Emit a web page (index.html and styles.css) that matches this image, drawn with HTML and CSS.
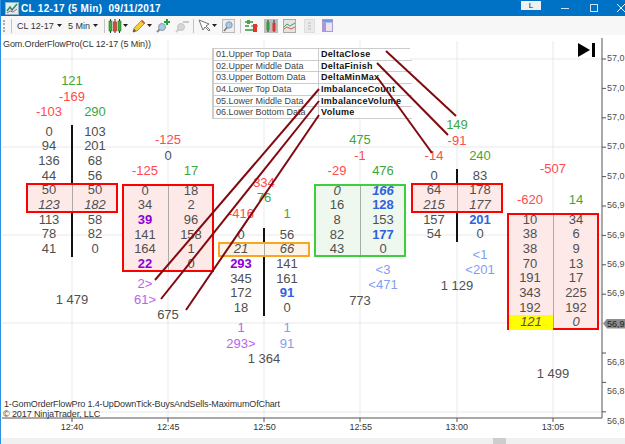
FILE: index.html
```html
<!DOCTYPE html>
<html lang="en">

<head>
    <meta charset="UTF-8">
    <title>CL 12-17 (5 Min) 09/11/2017</title>
    <link rel="stylesheet" href="styles.css">
</head>

<body>
    <div class="window">
        <div class="titlebar">
            <svg class="title-icon" viewBox="0 0 14 13">
                <rect x="0.5" y="0.5" width="13" height="12" fill="#dfeaf2" stroke="#8fb3c9" />
                <path d="M2 9l3-4 2 3 5-6" fill="none" stroke="#2d8f5a" stroke-width="1.5" />
                <path d="M2 11l3-2 3 1 4-3" fill="none" stroke="#c25a7a" />
            </svg>
            <span class="title-text">CL 12-17 (5 Min)&nbsp; 09/11/2017</span>
            <span class="link-btn">L</span>
            <span class="win-min"></span>
            <span class="win-max"></span>
            <svg class="win-close" viewBox="0 0 8 8">
                <path d="M0 0l8 8M8 0l-8 8" stroke="#fff" stroke-width="1" />
            </svg>
        </div>

        <div class="toolbar">
            <span class="grip"></span>
            <span class="sep ml6"></span>
            <span class="tool-label ml5 w35">CL 12-17</span>
            <span class="caret ml5"></span>
            <span class="tool-label ml6 w21">5 Min</span>
            <span class="caret ml4"></span>
            <span class="sep ml6"></span>
            <svg class="tool ml3" viewBox="0 0 14 14">
                <path d="M2.5 0v14M7 0v14M11.5 0v14" stroke="#333" />
                <rect x="1" y="2" width="3" height="10" fill="#3fae3f" stroke="#2a6e2a" stroke-width=".6" />
                <rect x="5.5" y="3" width="3" height="9" fill="#e04a3a" stroke="#8a2a20" stroke-width=".6" />
                <rect x="10" y="2" width="3" height="10" fill="#3fae3f" stroke="#2a6e2a" stroke-width=".6" />
            </svg>
            <span class="caret ml1"></span>
            <svg class="tool ml4" viewBox="0 0 14 14">
                <path d="M1 13l1-4 8-8 3 3-8 8z" fill="#f4c93a" stroke="#a8842a" stroke-width=".8" />
                <path d="M9.5 1.5l3 3" stroke="#d9574a" stroke-width="1.6" />
                <path d="M1 13l1-3 2 2z" fill="#444" />
            </svg>
            <span class="caret ml1"></span>
            <svg class="tool ml4" viewBox="0 0 14 14">
                <path d="M1 13l3-3" stroke="#8a8a8a" stroke-width="2" />
                <circle cx="6" cy="8" r="3.5" fill="#a9c9e8" stroke="#8a9aa8" />
                <path d="M11 0v6M8 3h6" stroke="#1fa02f" stroke-width="2" />
            </svg>
            <svg class="tool ml5" viewBox="0 0 14 14">
                <path d="M1 13l3-3" stroke="#ccc" stroke-width="2" />
                <circle cx="6" cy="8" r="3.5" fill="#d6d6d6" stroke="#c4c4c4" />
                <path d="M8 3h6" stroke="#c8c8c8" stroke-width="2" />
            </svg>
            <span class="sep ml4"></span>
            <svg class="tool tool-narrow ml4" viewBox="0 0 13 14">
                <path d="M1 1l4 10 2-3 4 4 1-1-4-4 3-2z" fill="#fff" stroke="#666" stroke-width=".9" />
            </svg>
            <span class="caret ml1"></span>
            <svg class="tool tool-narrow ml5" viewBox="0 0 13 14">
                <rect x="0.5" y="0.5" width="12" height="13" fill="#eee" stroke="#bbb" />
                <circle cx="7" cy="6" r="3.2" fill="#a9c9e8" stroke="#8a9aa8" />
                <path d="M2 12l3-3.5" stroke="#777" stroke-width="1.6" />
            </svg>
            <span class="sep ml5"></span>
            <svg class="tool tool-narrow ml4" viewBox="0 0 13 14">
                <path d="M0 3h8M0 7h4M0 11h8" stroke="#2f9a3a" stroke-width="1.6" />
                <path d="M6 7h7" stroke="#666" />
                <rect x="8" y="5" width="4" height="8" fill="#d8392f" />
                <rect x="2" y="1" width="3" height="4" fill="#3fae3f" />
            </svg>
            <svg class="tool ml6" viewBox="0 0 14 14">
                <rect width="14" height="14" fill="#bdbdbd" />
                <path d="M4 1v12M10 1v12" stroke="#333" />
                <rect x="2.5" y="3" width="3" height="8" fill="#3c9a3c" />
                <rect x="8.5" y="4" width="3" height="8" fill="#d8392f" />
            </svg>
            <svg class="tool tool-narrow ml5" viewBox="0 0 13 14">
                <rect x="0.5" y="0.5" width="12" height="13" fill="#e4e4e4" stroke="#aaa" />
                <path d="M1 8l3-3 3 2 5-3" fill="none" stroke="#4aa35a" />
                <path d="M1 10l3-2 4 2 4-2" fill="none" stroke="#d9574a" />
            </svg>
            <svg class="tool tool-narrow ml7" viewBox="0 0 13 14">
                <rect x="1.5" y="0.5" width="10" height="13" fill="#eaeaea" stroke="#ddd" />
                <path d="M5 4h3M5 7h3M5 10h3" stroke="#bbb" />
            </svg>
            <svg class="tool tool-small ml6" viewBox="0 0 11 13">
                <rect x="0.5" y="0.5" width="10" height="12" fill="#e8e4f4" stroke="#a89ccc" />
                <rect x="1" y="1" width="9" height="2.5" fill="#6f9ee0" />
                <rect x="1" y="3.5" width="3" height="9" fill="#b690e0" />
            </svg>
        </div>

        <div class="chart">
            <svg class="layer" viewBox="0 0 625 403">
                <g class="gridlines">
                    <path d="M72 6V383M168 6V383M264 6V383M360 6V383M457 6V383M553 6V383" />
                    <path d="M2 24H602M2 112H602M2 200H602M2 288H602M2 377H602" />
                </g>
                <g class="axis-lines">
                    <path d="M2 383H602M602 3V383" />
                    <path d="M72 383v4M168 383v4M264 383v4M360 383v4M457 383v4M553 383v4" />
                    <path d="M602 24h4M602 53.400h4M602 82.800h4M602 112.200h4M602 141.600h4M602 171h4M602 200.400h4M602 229.800h4M602 259.200h4M602 318h4M602 347.400h4M602 376.800h4" />
                </g>
            </svg>

            <div class="legend legend-top">Gom.OrderFlowPro(CL 12-17 (5 Min))</div>
            <div class="legend legend-name">1-GomOrderFlowPro 1.4-UpDownTick-BuysAndSells-MaximumOfChart</div>
            <div class="legend legend-copy">&copy; 2017 NinjaTrader, LLC</div>

            <div class="cluster c1">
                <div class="row wide green">121</div>
                <div class="row wide red">-169</div>
                <div class="row"><span class="red">-103</span><span class="green">290</span></div>
                <div class="ladder">
                    <div class="row"><span>0</span><span>103</span></div>
                    <div class="row"><span>94</span><span>201</span></div>
                    <div class="row"><span>136</span><span>68</span></div>
                    <div class="row"><span>44</span><span>56</span></div>
                    <div class="zone zone-red">
                        <div class="row"><span>50</span><span>50</span></div>
                        <div class="row italic"><span>123</span><span>182</span></div>
                    </div>
                    <div class="row"><span>113</span><span>58</span></div>
                    <div class="row"><span>78</span><span>82</span></div>
                    <div class="row"><span>41</span><span>0</span></div>
                </div>
                <div class="row"></div>
                <div class="row"></div>
                <div class="row wide">1 479</div>
            </div>

            <div class="cluster c2">
                <div class="row wide red">-125</div>
                <div class="row wide">0</div>
                <div class="row"><span class="red">-125</span><span class="green">17</span></div>
                <div class="ladder">
                    <div class="zone zone-red">
                        <div class="row"><span>0</span><span>18</span></div>
                        <div class="row"><span>34</span><span>2</span></div>
                        <div class="row"><span class="purple">39</span><span>96</span></div>
                        <div class="row"><span>141</span><span>158</span></div>
                        <div class="row"><span>164</span><span>1</span></div>
                        <div class="row"><span class="purple">22</span><span>0</span></div>
                    </div>
                </div>
                <div class="row"><span class="lilac">2&gt;</span><span></span></div>
                <div class="row"><span class="lilac">61&gt;</span><span></span></div>
                <div class="row wide">675</div>
            </div>

            <div class="cluster c3">
                <div class="row wide red">334</div>
                <div class="row wide green">76</div>
                <div class="row"><span class="red">-416</span><span class="green">1</span></div>
                <div class="ladder">
                    <div class="row"><span>0</span><span>56</span></div>
                    <div class="zone zone-orange">
                        <div class="row italic"><span>21</span><span>66</span></div>
                    </div>
                    <div class="row"><span class="purple">293</span><span>141</span></div>
                    <div class="row"><span>345</span><span>161</span></div>
                    <div class="row"><span>172</span><span class="blue">91</span></div>
                    <div class="row"><span>18</span><span>0</span></div>
                </div>
                <div class="row"><span class="lilac">1</span><span class="sky">1</span></div>
                <div class="row"><span class="lilac">293&gt;</span><span class="sky">91</span></div>
                <div class="row wide">1 364</div>
            </div>

            <div class="cluster c4">
                <div class="row wide green">475</div>
                <div class="row wide red">-1</div>
                <div class="row"><span class="red">-29</span><span class="green">476</span></div>
                <div class="ladder">
                    <div class="zone zone-green">
                        <div class="row italic"><span>0</span><span class="blue">166</span></div>
                        <div class="row"><span>16</span><span class="blue">128</span></div>
                        <div class="row"><span>8</span><span>153</span></div>
                        <div class="row"><span>82</span><span class="blue">177</span></div>
                        <div class="row"><span>43</span><span>0</span></div>
                    </div>
                </div>
                <div class="row"><span></span><span class="sky">&lt;3</span></div>
                <div class="row"><span></span><span class="sky">&lt;471</span></div>
                <div class="row wide">773</div>
            </div>

            <div class="cluster c5">
                <div class="row wide green">149</div>
                <div class="row wide red">-91</div>
                <div class="row"><span class="red">-14</span><span class="green">240</span></div>
                <div class="ladder">
                    <div class="row"><span>0</span><span>83</span></div>
                    <div class="zone zone-red">
                        <div class="row"><span>64</span><span>178</span></div>
                        <div class="row italic"><span>215</span><span>177</span></div>
                    </div>
                    <div class="row"><span>157</span><span class="blue">201</span></div>
                    <div class="row"><span>54</span><span>0</span></div>
                </div>
                <div class="row"><span></span><span class="sky">&lt;1</span></div>
                <div class="row"><span></span><span class="sky">&lt;201</span></div>
                <div class="row wide">1 129</div>
            </div>

            <div class="cluster c6">
                <div class="row wide red">-507</div>
                <div class="row"></div>
                <div class="row"><span class="red">-620</span><span class="green">14</span></div>
                <div class="ladder">
                    <div class="zone zone-red">
                        <div class="row"><span>10</span><span>34</span></div>
                        <div class="row"><span>38</span><span>6</span></div>
                        <div class="row"><span>38</span><span>9</span></div>
                        <div class="row"><span>70</span><span>13</span></div>
                        <div class="row"><span>191</span><span>17</span></div>
                        <div class="row"><span>343</span><span>225</span></div>
                        <div class="row"><span>192</span><span>192</span></div>
                        <div class="row italic"><span class="poc">121</span><span>0</span></div>
                    </div>
                </div>
                <div class="row"></div>
                <div class="row"></div>
                <div class="row wide">1 499</div>
            </div>

            <div class="data-table">
                <span>01.Upper Top Data</span><b>DeltaClose</b>
                <span>02.Upper Middle Data</span><b>DeltaFinish</b>
                <span>03.Upper Bottom Data</span><b>DeltaMinMax</b>
                <span>04.Lower Top Data</span><b>ImbalanceCount</b>
                <span>05.Lower Middle Data</span><b>ImbalanceVolume</b>
                <span>06.Lower Bottom Data</span><b>Volume</b>
            </div>

            <svg class="layer" viewBox="0 0 625 403">
                <g class="drawn-lines">
                    <path d="M386 16L456 81" />
                    <path d="M377 28L448 100" />
                    <path d="M377 42L432 118" />
                    <path d="M319 54L155 245" />
                    <path d="M319 66L161 264" />
                    <path d="M319 80L186 275" />
                </g>
                <path class="end-mark" d="M578 8L590 15L578 22z" />
                <rect class="end-mark" x="592" y="8" width="3" height="14" />
            </svg>

            <div class="price-axis">
                <div class="price">57,0</div>
                <div class="price">57,0</div>
                <div class="price">57,0</div>
                <div class="price">57,0</div>
                <div class="price">57,0</div>
                <div class="price">56,9</div>
                <div class="price">56,9</div>
                <div class="price">56,9</div>
                <div class="price">56,9</div>
                <div class="price"><span class="last-price">56,9</span></div>
                <div class="price">56,8</div>
                <div class="price">56,8</div>
                <div class="price">56,8</div>
            </div>

            <div class="time-axis">
                <span>12:40</span>
                <span>12:45</span>
                <span>12:50</span>
                <span>12:55</span>
                <span>13:00</span>
                <span>13:05</span>
            </div>
        </div>

        <div class="scrollbar"><span class="thumb"></span></div>
    </div>
</body>

</html>
```

FILE: styles.css
```css
* {
    box-sizing: border-box;
}

body {
    margin: 0;
    font-family: "Liberation Sans", Arial, sans-serif;
    color: #505050;
}

.window {
    position: relative;
    width: 625px;
    height: 444px;
    overflow: hidden;
    display: flex;
    flex-direction: column;
    background-color: #fff;
}

/* thin blue window edge on the left */
.window::before {
    content: "";
    position: absolute;
    left: 0;
    top: 0;
    bottom: 0;
    width: 1px;
    background-color: #2f8fe0;
    z-index: 5;
}

/* Title bar */
.titlebar {
    height: 16px;
    display: flex;
    align-items: center;
    background-color: #0072c6;
    color: #fff;
}

.title-icon {
    width: 14px;
    height: 13px;
    margin-left: 5px;
}

.title-text {
    margin-left: 2px;
    font-size: 10px;
    font-weight: bold;
    letter-spacing: 0.3px;
    white-space: nowrap;
}

.link-btn {
    width: 20px;
    height: 9px;
    margin-left: auto;
    background-color: #f0f0f0;
    color: #222;
    font-size: 8px;
    line-height: 9px;
    text-align: center;
    margin-bottom: 6px;
}

.win-min {
    width: 8px;
    height: 1px;
    margin-left: 20px;
    background-color: #cfe4f5;
}

.win-max {
    width: 8px;
    height: 8px;
    margin-left: 21px;
    border: 1px solid #cfe4f5;
}

.win-close {
    width: 8px;
    height: 8px;
    margin-left: 19px;
    flex: none;
}

/* Toolbar */
.toolbar {
    height: 19px;
    padding-left: 3px;
    display: flex;
    align-items: center;
    background-color: #f7f7f7;
    font-size: 9px;
    color: #333;
}

.grip {
    width: 2px;
    height: 12px;
    border-left: 2px dotted #aaa;
}

.sep {
    width: 1px;
    height: 14px;
    background-color: #c4c4c4;
}

.tool-label {
    white-space: nowrap;
}

.w35 {
    width: 35px;
}

.w21 {
    width: 21px;
}

.caret {
    width: 5px;
    height: 3px;
    clip-path: polygon(0 0, 100% 0, 50% 100%);
    background-color: #222;
}

.tool {
    width: 14px;
    height: 14px;
    flex: none;
}

.tool-narrow {
    width: 13px;
}

.tool-small {
    width: 11px;
    height: 13px;
}

.ml1 { margin-left: 1px; }
.ml3 { margin-left: 3px; }
.ml4 { margin-left: 4px; }
.ml5 { margin-left: 5px; }
.ml6 { margin-left: 6px; }
.ml7 { margin-left: 7px; }

/* Chart */
.chart {
    position: relative;
    height: 403px;
    overflow: hidden;
    background-color: #fff;
}

.layer {
    position: absolute;
    left: 0;
    top: 0;
    width: 625px;
    height: 403px;
}

.gridlines path {
    fill: none;
    stroke: #e9e9e9;
    stroke-width: 1;
}

.axis-lines path {
    fill: none;
    stroke: #555;
    stroke-width: 1;
}

.drawn-lines path {
    fill: none;
    stroke: #800a10;
    stroke-width: 2;
}

.end-mark {
    fill: #000;
}

.legend {
    position: absolute;
    left: 3px;
    font-size: 9px;
    color: #333;
    white-space: nowrap;
    letter-spacing: -0.1px;
}

.legend-top {
    top: 4px;
}

.legend-name {
    top: 364px;
    left: 4px;
    letter-spacing: -0.14px;
}

.legend-copy {
    top: 374px;
}

/* Footprint clusters */
.cluster {
    position: absolute;
    width: 92px;
    font-size: 13px;
}

.c1 { left: 26px; top: 38.2px; }
.c2 { left: 122px; top: 97.2px; }
.c3 { left: 218px; top: 139.7px; }
.c4 { left: 314px; top: 97.2px; }
.c5 { left: 411px; top: 82.2px; }
.c6 { left: 507px; top: 126.2px; }

.row {
    height: 15.5px;
    line-height: 15.5px;
    display: grid;
    grid-template-columns: 1fr 1fr;
    text-align: center;
}

.row.wide {
    display: block;
}

.ladder {
    position: relative;
    margin: 5px 0 4.6px;
}

.c3 .ladder {
    margin-top: 6.5px;
}

.ladder::before {
    content: "";
    position: absolute;
    left: 45px;
    top: 0;
    bottom: 0;
    width: 2px;
    background-color: #111;
}

.ladder .row {
    position: relative;
    height: 14.67px;
    line-height: 14.67px;
}

.zone {
    position: relative;
    outline: 2px solid;
    outline-offset: -2px;
}

/* gray centre line inside a zone */
.zone::before {
    content: "";
    position: absolute;
    left: 45.5px;
    top: 2px;
    bottom: 2px;
    width: 1px;
    background-color: #aaa;
}

.zone-red {
    outline-color: #f00;
    background-color: #fee9e9;
}

.zone-orange {
    outline-color: #f7a823;
    background-color: #fdf3e6;
}

.zone-green {
    outline-color: #3fce3f;
    background-color: #eef8ee;
}

.italic {
    font-style: italic;
}

.red { color: #ff4b4b; }
.green { color: #3ea63e; }
.purple { color: #8c00d8; font-weight: bold; }
.blue { color: #2f62dc; font-weight: bold; }
.lilac { color: #bb62ee; }
.sky { color: #7f9ff0; }

.poc {
    margin: 0 0 1px 2px;
    background-color: #ff0;
}

/* Indicator table */
.data-table {
    position: absolute;
    left: 212px;
    top: 13px;
    width: 198px;
    display: grid;
    grid-template-columns: 105px 93px;
    grid-auto-rows: 11.7px;
    background-color: #fff;
    border-top: 1px solid #ccc;
    border-left: 2px solid #ccc;
    font-size: 9px;
    line-height: 10.5px;
    color: #444;
}

.data-table span,
.data-table b {
    padding-left: 2px;
    border-bottom: 1px solid #ccc;
    white-space: nowrap;
}

.data-table span {
    border-right: 1px solid #ccc;
}

.data-table b {
    letter-spacing: 0.3px;
    color: #111;
}

/* Axes */
.price-axis {
    position: absolute;
    left: 603px;
    top: 9.3px;
    width: 22px;
    overflow: hidden;
    font-size: 9px;
}

.price {
    height: 29.4px;
    line-height: 29.4px;
    padding-left: 4px;
    white-space: nowrap;
}

.last-price {
    display: block;
    height: 10px;
    margin-left: -4px;
    padding-left: 4px;
    margin-top: 9.7px;
    line-height: 10px;
    background-color: #8c8c8c;
    clip-path: polygon(0 50%, 4px 0, 100% 0, 100% 100%, 4px 100%);
    color: #222;
}

.time-axis {
    position: absolute;
    left: 24px;
    top: 387px;
    display: flex;
    font-size: 9px;
    color: #333;
}

.time-axis span {
    width: 96.2px;
    text-align: center;
}

/* Bottom scrollbar */
.scrollbar {
    height: 6px;
    background-color: #f0f0f0;
    display: flex;
}

.thumb {
    width: 13px;
    margin-left: 493px;
    background-color: #cdcdcd;
}
```
